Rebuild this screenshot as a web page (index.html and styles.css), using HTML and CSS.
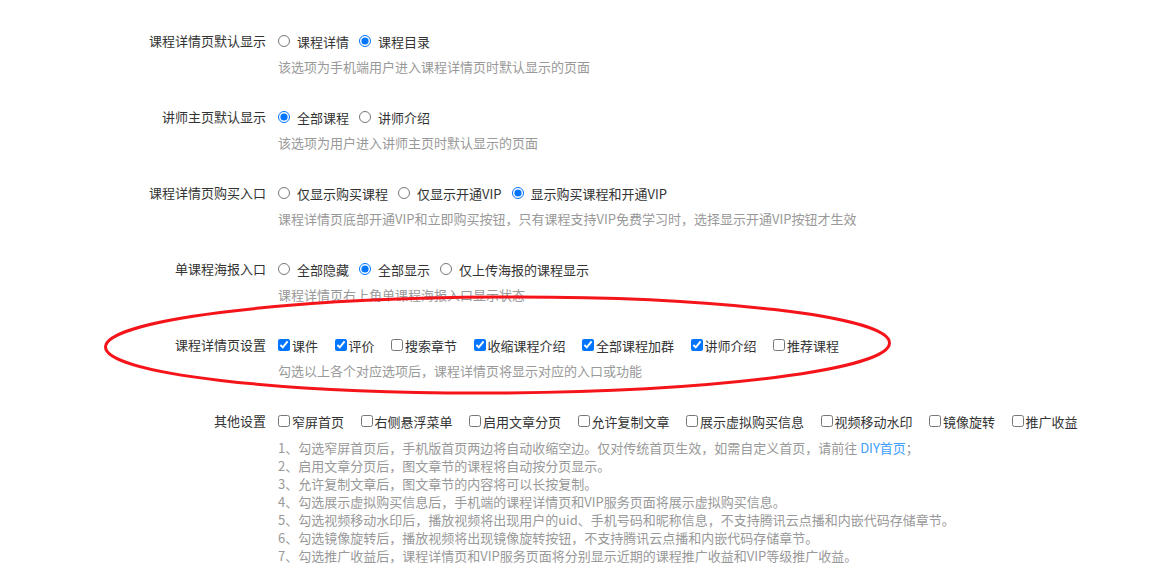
FILE: index.html
```html
<!DOCTYPE html>
<html>
<head>
    <meta charset="utf-8">
    <title>课程设置</title>
    <link rel="stylesheet" href="styles.css">
</head>
<body>
    <div class="settings">
        <div class="form-item">
            <div class="item-label">课程详情页默认显示</div>
            <div class="item-content">
                <div class="options">
                    <label class="radio"><input type="radio" name="detail-default">课程详情</label>
                    <label class="radio"><input type="radio" name="detail-default" checked>课程目录</label>
                </div>
                <div class="help">该选项为手机端用户进入课程详情页时默认显示的页面</div>
            </div>
        </div>

        <div class="form-item">
            <div class="item-label">讲师主页默认显示</div>
            <div class="item-content">
                <div class="options">
                    <label class="radio"><input type="radio" name="teacher-default" checked>全部课程</label>
                    <label class="radio"><input type="radio" name="teacher-default">讲师介绍</label>
                </div>
                <div class="help">该选项为用户进入讲师主页时默认显示的页面</div>
            </div>
        </div>

        <div class="form-item">
            <div class="item-label">课程详情页购买入口</div>
            <div class="item-content">
                <div class="options">
                    <label class="radio"><input type="radio" name="buy-entry">仅显示购买课程</label>
                    <label class="radio"><input type="radio" name="buy-entry">仅显示开通VIP</label>
                    <label class="radio"><input type="radio" name="buy-entry" checked>显示购买课程和开通VIP</label>
                </div>
                <div class="help">课程详情页底部开通VIP和立即购买按钮，只有课程支持VIP免费学习时，选择显示开通VIP按钮才生效</div>
            </div>
        </div>

        <div class="form-item">
            <div class="item-label">单课程海报入口</div>
            <div class="item-content">
                <div class="options">
                    <label class="radio"><input type="radio" name="poster-entry">全部隐藏</label>
                    <label class="radio"><input type="radio" name="poster-entry" checked>全部显示</label>
                    <label class="radio"><input type="radio" name="poster-entry">仅上传海报的课程显示</label>
                </div>
                <div class="help">课程详情页右上角单课程海报入口显示状态</div>
            </div>
        </div>

        <div class="form-item">
            <div class="item-label">课程详情页设置</div>
            <div class="item-content">
                <div class="options">
                    <label class="check"><input type="checkbox" checked>课件</label>
                    <label class="check"><input type="checkbox" checked>评价</label>
                    <label class="check"><input type="checkbox">搜索章节</label>
                    <label class="check"><input type="checkbox" checked>收缩课程介绍</label>
                    <label class="check"><input type="checkbox" checked>全部课程加群</label>
                    <label class="check"><input type="checkbox" checked>讲师介绍</label>
                    <label class="check"><input type="checkbox">推荐课程</label>
                </div>
                <div class="help">勾选以上各个对应选项后，课程详情页将显示对应的入口或功能</div>
            </div>
        </div>

        <div class="form-item form-item-last">
            <div class="item-label">其他设置</div>
            <div class="item-content">
                <div class="options">
                    <label class="check"><input type="checkbox">窄屏首页</label>
                    <label class="check"><input type="checkbox">右侧悬浮菜单</label>
                    <label class="check"><input type="checkbox">启用文章分页</label>
                    <label class="check"><input type="checkbox">允许复制文章</label>
                    <label class="check"><input type="checkbox">展示虚拟购买信息</label>
                    <label class="check"><input type="checkbox">视频移动水印</label>
                    <label class="check"><input type="checkbox">镜像旋转</label>
                    <label class="check"><input type="checkbox">推广收益</label>
                </div>
                <ul class="help help-list">
                    <li>1、勾选窄屏首页后，手机版首页两边将自动收缩空边。仅对传统首页生效，如需自定义首页，请前往 <a href="#" class="link">DIY首页</a>；</li>
                    <li>2、启用文章分页后，图文章节的课程将自动按分页显示。</li>
                    <li>3、允许复制文章后，图文章节的内容将可以长按复制。</li>
                    <li>4、勾选展示虚拟购买信息后，手机端的课程详情页和VIP服务页面将展示虚拟购买信息。</li>
                    <li>5、勾选视频移动水印后，播放视频将出现用户的uid、手机号码和昵称信息，不支持腾讯云点播和内嵌代码存储章节。</li>
                    <li>6、勾选镜像旋转后，播放视频将出现镜像旋转按钮，不支持腾讯云点播和内嵌代码存储章节。</li>
                    <li>7、勾选推广收益后，课程详情页和VIP服务页面将分别显示近期的课程推广收益和VIP等级推广收益。</li>
                </ul>
            </div>
        </div>
    </div>

    <svg class="mark" width="1158" height="588" viewBox="0 0 1158 588">
        <ellipse cx="497.5" cy="345" rx="392" ry="48" transform="rotate(-0.3 497.5 345)" fill="none" stroke="#f5141a" stroke-width="3"/>
    </svg>
</body>
</html>
```

FILE: styles.css
```css
body {
    margin: 0;
    font-family: "Noto Sans CJK SC", sans-serif;
    font-size: 13px;
    color: #333;
    background: #fff;
}

.settings {
    padding-top: 25px;
}

.form-item {
    display: flex;
    margin-bottom: 24px;
}

.form-item-last {
    margin-top: 7px;
}

.item-label {
    flex-shrink: 0;
    width: 278px;
    box-sizing: border-box;
    padding-right: 12px;
    text-align: right;
    line-height: 32px;
}

.options {
    display: flex;
    align-items: center;
    height: 32px;
    white-space: nowrap;
}

.radio, .check {
    display: flex;
    align-items: center;
    cursor: pointer;
}

.radio {
    margin-right: 10px;
}

.radio input {
    width: 12px;
    height: 12px;
    margin: 0 7px 0 0;
}

.check {
    margin-right: 16.5px;
}

.check input {
    width: 12px;
    height: 12px;
    margin: 0 2px 0 0;
}

.help {
    color: #999;
    line-height: 20px;
}

.help-list {
    list-style: none;
    margin: 0;
    padding: 2px 0 0;
    line-height: 18px;
}

.link {
    color: #409eff;
    text-decoration: none;
}

.mark {
    position: absolute;
    top: 0;
    left: 0;
    pointer-events: none;
}
```
